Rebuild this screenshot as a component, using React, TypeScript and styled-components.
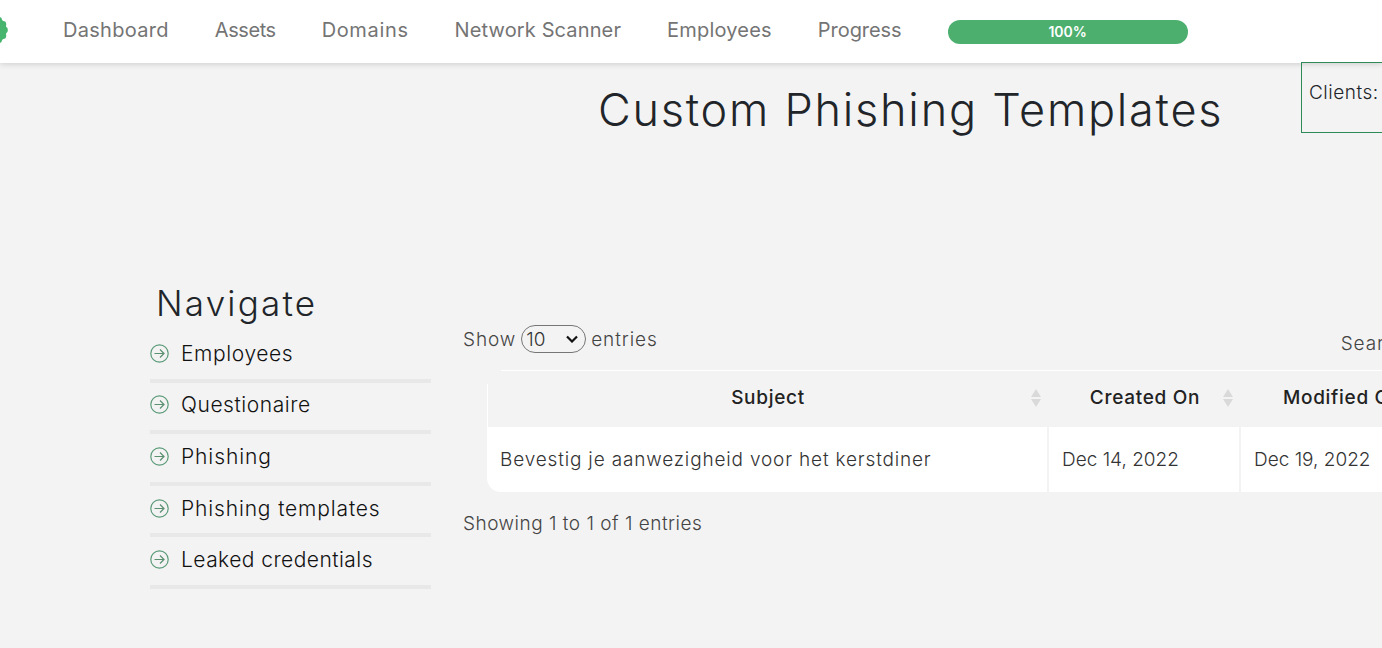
import React from "react";
import styled, { createGlobalStyle } from "styled-components";

const Global = createGlobalStyle`
  html, body { margin: 0; padding: 0; background: #f3f3f3; overflow: hidden; height: 648px; }
  body { font-family: Inter, "Liberation Sans", sans-serif; }
`;

const Page = styled.div`
  width: 1382px;
  height: 648px;
  overflow: hidden;
  background: #f3f3f3;
`;

const Header = styled.header`
  position: relative;
  z-index: 1;
  width: 1382px;
  height: 63px;
  display: flex;
  align-items: center;
  background: #fff;
  box-shadow: 0 1px 6px rgba(0, 0, 0, 0.16);
`;

const Logo = styled.svg`
  width: 30px;
  height: 30px;
  margin-left: -22px;
  margin-right: 55px;
  margin-bottom: 3px;
  flex: none;
`;

const NavLink = styled.a<{ $ls: number }>`
  font-size: 20px;
  line-height: 24px;
  color: #747474;
  margin-right: 46px;
  margin-bottom: 4px;
  letter-spacing: ${(p) => p.$ls}px;
  white-space: nowrap;
`;

const Progress = styled.div`
  width: 240px;
  height: 24px;
  border-radius: 12px;
  background: #4caf6e;
  margin-top: 1px;
  color: #fff;
  font-size: 14px;
  font-weight: 600;
  line-height: 24px;
  text-align: center;
`;

const TitleRow = styled.div`
  display: flex;
  align-items: flex-start;
  width: 1500px;
  height: 222px;
`;

const Title = styled.h1`
  margin: 0;
  width: 1301px;
  padding: 19px 0 0 598px;
  box-sizing: border-box;
  font-size: 45px;
  line-height: 56px;
  font-weight: 300;
  color: #212529;
  letter-spacing: 1.77px;
  white-space: nowrap;
`;

const ClientsBox = styled.div`
  flex: none;
  margin-top: -1px;
  position: relative;
  z-index: 2;
  width: 190px;
  height: 71px;
  box-sizing: border-box;
  border: 1px solid #2e8b57;
  padding: 18px 0 0 7px;
  font-size: 19px;
  font-weight: 350;
  line-height: 24px;
  color: #212529;
  letter-spacing: 0.5px;
`;

const Content = styled.div`
  display: flex;
  align-items: flex-start;
  width: 1700px;
  padding-left: 150px;
`;

const Sidebar = styled.aside`
  width: 281px;
  flex: none;
  margin-right: 32px;
`;

const SideTitle = styled.h2`
  margin: 0 0 10px 6px;
  font-size: 35px;
  line-height: 36px;
  font-weight: 300;
  color: #212529;
  letter-spacing: 2.2px;
`;

const SideItem = styled.a<{ $ls: number }>`
  display: flex;
  align-items: center;
  height: 44.6px;
  padding-bottom: 3px;
  border-bottom: 4px solid #e8e8e8;
  font-size: 21px;
  font-weight: 350;
  color: #111;
  letter-spacing: ${(p) => p.$ls}px;
`;

const SideIcon = styled.svg`
  width: 19px;
  height: 19px;
  margin-right: 12px;
  flex: none;
`;

const Main = styled.section`
  flex: 1;
  padding-top: 39px;
`;

const Controls = styled.div`
  display: flex;
  align-items: center;
  height: 30px;
  font-size: 19px;
  font-weight: 350;
  color: #444;
  letter-spacing: 0.9px;
`;

const SelectBox = styled.select`
  appearance: none;
  width: 65px;
  height: 28px;
  margin: 0 5px;
  padding: 0 0 0 4px;
  border: 1px solid #767676;
  border-radius: 14px;
  background: transparent url("data:image/svg+xml,%3Csvg xmlns='http://www.w3.org/2000/svg' width='14' height='8' viewBox='0 0 14 8'%3E%3Cpath d='M2 1.5l5 5 5-5' fill='none' stroke='%23111' stroke-width='2.2'/%3E%3C/svg%3E") no-repeat right 6px center;
  font: inherit;
  letter-spacing: 0;
  color: #333;
`;

const SearchLabel = styled.label`
  margin-left: 683px;
  margin-top: 8px;
`;

const TableWrap = styled.div`
  margin: 16px 0 0 24px;
  width: 1100px;
`;

const Table = styled.table`
  border-collapse: separate;
  border-spacing: 0;
  table-layout: fixed;
  width: 1100px;
`;

const Th = styled.th<{ $w: number }>`
  position: relative;
  width: ${(p) => p.$w}px;
  height: 57px;
  box-sizing: border-box;
  padding: 0 0 2px;
  font-size: 19px;
  font-weight: 500;
  color: #222;
  text-align: center;
  white-space: nowrap;
  letter-spacing: 0.7px;
  &::before {
    content: "";
    position: absolute;
    top: 0;
    left: 0;
    right: 0;
    height: 1px;
    background: #fff;
  }
  &:first-child::before { left: 14px; }
  &:first-child::after {
    content: "";
    position: absolute;
    top: 14px;
    bottom: 0;
    left: 0;
    width: 1px;
    background: #fff;
  }
`;

const Sort = styled.svg`
  position: absolute;
  right: 8px;
  top: 19px;
  width: 10px;
  height: 18px;
`;

const Td = styled.td<{ $ls?: number }>`
  height: 65px;
  box-sizing: border-box;
  padding: 0 0 0 13px;
  background: #fff;
  border-right: 2px solid #f3f3f3;
  font-size: 19px;
  font-weight: 350;
  color: #333;
  white-space: nowrap;
  letter-spacing: ${(p) => p.$ls ?? 0}px;
  &:first-child { border-bottom-left-radius: 14px; }
`;

const Info = styled.div`
  margin-top: 20px;
  font-size: 19px;
  font-weight: 350;
  line-height: 24px;
  color: #444;
  letter-spacing: 0.5px;
`;

const items: [string, number][] = [
  ["Employees", 0.6],
  ["Questionaire", 0.55],
  ["Phishing", 0.9],
  ["Phishing templates", 0.85],
  ["Leaked credentials", 0.45],
];
const navs: [string, number][] = [
  ["Dashboard", 0.3],
  ["Assets", -0.45],
  ["Domains", 0.65],
  ["Network Scanner", 0.13],
  ["Employees", 0.2],
  ["Progress", -0.05],
];

const bumps = Array.from({ length: 12 }, (_, i) => (i * Math.PI * 2) / 12);

const Arrow = () => (
  <SideIcon viewBox="0 0 19 19" fill="none">
    <circle cx="9.5" cy="9.5" r="8.7" stroke="#5a9a78" strokeWidth="1.2" />
    <path d="M4.5 9.5h9.5M10 5.5l4 4-4 4" stroke="#5a8f70" strokeWidth="1.2" />
  </SideIcon>
);

const SortIcon = () => (
  <Sort viewBox="0 0 10 18">
    <path d="M5 0l5 8H0zM5 18l5-8H0z" fill="#d9d9d9" />
  </Sort>
);

export default function App() {
  return (
    <Page>
      <Global />
      <Header>
        <Logo viewBox="0 0 30 30">
          <circle cx="15" cy="15" r="13.6" fill="#48b56e" />
          {bumps.map((a) => (
            <circle key={a} cx={15 + 11.6 * Math.cos(a)} cy={15 + 11.6 * Math.sin(a)} r="3.2" fill="#48b56e" />
          ))}
        </Logo>
        {navs.map(([n, ls]) => (
          <NavLink key={n} $ls={ls}>
            {n}
          </NavLink>
        ))}
        <Progress>100%</Progress>
      </Header>
      <TitleRow>
        <Title>Custom Phishing Templates</Title>
        <ClientsBox>Clients:</ClientsBox>
      </TitleRow>
      <Content>
        <Sidebar>
          <SideTitle>Navigate</SideTitle>
          {items.map(([i, ls]) => (
            <SideItem key={i} $ls={ls}>
              <Arrow />
              {i}
            </SideItem>
          ))}
        </Sidebar>
        <Main>
          <Controls>
            Show
            <SelectBox defaultValue="10">
              <option>10</option>
              <option>25</option>
            </SelectBox>
            entries
            <SearchLabel>Search:</SearchLabel>
          </Controls>
          <TableWrap>
            <Table>
              <thead>
                <tr>
                  <Th $w={562}>
                    Subject
                    <SortIcon />
                  </Th>
                  <Th $w={192}>
                    Created On
                    <SortIcon />
                  </Th>
                  <Th $w={203}>
                    Modified On
                    <SortIcon />
                  </Th>
                  <Th $w={143} />
                </tr>
              </thead>
              <tbody>
                <tr>
                  <Td $ls={0.83}>Bevestig je aanwezigheid voor het kerstdiner</Td>
                  <Td>Dec 14, 2022</Td>
                  <Td>Dec 19, 2022</Td>
                  <Td />
                </tr>
              </tbody>
            </Table>
          </TableWrap>
          <Info>Showing 1 to 1 of 1 entries</Info>
        </Main>
      </Content>
    </Page>
  );
}
